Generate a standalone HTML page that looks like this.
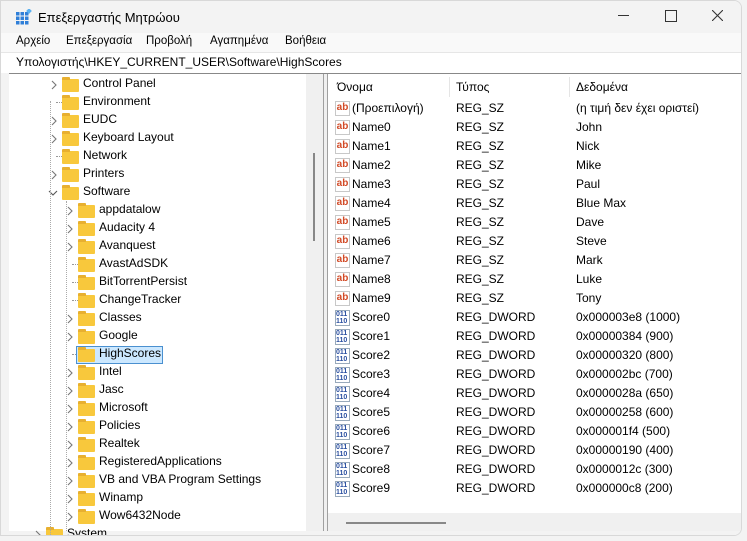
<!DOCTYPE html><html><head><style>
body{margin:0;width:747px;height:541px;background:#f3f3f3;font-family:"Liberation Sans","DejaVu Sans",sans-serif;font-size:12px;color:#000;position:relative;overflow:hidden}
.a{position:absolute;white-space:nowrap}
.win{position:absolute;left:0;top:0;width:740px;height:534px;background:#fff;border:1px solid #d8d8d8;border-radius:0 8px 8px 0;overflow:hidden}
.fold{position:absolute;width:17px;height:13px;background:#f8c83c;border-radius:1px}
.fold:before{content:"";position:absolute;left:0;top:-2px;width:8px;height:3px;background:#e8b030;border-radius:1px 1px 0 0}
.chev{position:absolute}
.ab{position:absolute;width:13px;height:13px;border:1px solid #c8c8c8;background:#fff;color:#d24a26;font-weight:bold;font-size:10px;line-height:12px;text-align:center}
.bi{position:absolute;width:13px;height:14px;color:#2a4fa0;font-size:7px;line-height:7px;font-weight:bold;border:1px solid #9ab}
.m{font-size:11.5px}
</style></head><body>
<div class="win">
<div class="a" style="left:0;top:0;width:740px;height:32px;background:#f3f3f3"></div>
<svg class="a" style="left:15px;top:8px" width="16" height="16"><g fill="#2f7fd8"><rect x="0" y="3" width="3.5" height="3.5"/><rect x="4.5" y="3" width="3.5" height="3.5"/><rect x="9" y="3" width="3.5" height="3.5"/><rect x="0" y="7.5" width="3.5" height="3.5"/><rect x="4.5" y="7.5" width="3.5" height="3.5"/><rect x="9" y="7.5" width="3.5" height="3.5"/><rect x="0" y="12" width="3.5" height="3.5"/><rect x="4.5" y="12" width="3.5" height="3.5"/><rect x="9" y="12" width="3.5" height="3.5"/></g><rect x="11" y="0" width="4" height="4" fill="#5ab0f0" transform="rotate(45 13 2)"/></svg>
<div class="a" style="left:37px;top:9px;font-size:13px">Επεξεργαστής Μητρώου</div>
<div class="a" style="left:617px;top:14px;width:11px;height:1px;background:#333"></div>
<div class="a" style="left:664px;top:9px;width:10px;height:10px;border:1px solid #333"></div>
<svg class="a" style="left:711px;top:9px" width="11" height="11"><path d="M0 0L11 11M11 0L0 11" stroke="#333" stroke-width="1.1"/></svg>
<div class="a" style="left:0;top:32px;width:740px;height:19px;background:#f9f9f9"></div>
<div class="a m" style="left:15px;top:34px">Αρχείο</div>
<div class="a m" style="left:65px;top:34px">Επεξεργασία</div>
<div class="a m" style="left:145px;top:34px">Προβολή</div>
<div class="a m" style="left:209px;top:34px">Αγαπημένα</div>
<div class="a m" style="left:284px;top:34px">Βοήθεια</div>
<div class="a" style="left:0;top:51px;width:740px;height:20px;background:#fff;border-top:1px solid #e6e6e6;border-bottom:1px solid #e6e6e6"></div>
<div class="a" style="left:15px;top:54px">Υπολογιστής\HKEY_CURRENT_USER\Software\HighScores</div>
<div class="a" style="left:0;top:72px;width:8px;height:462px;background:#f3f3f3"></div>
<div class="a" style="left:305px;top:72px;width:17px;height:462px;background:#f0f0f0"></div>
<div class="a" style="left:312px;top:152px;width:2px;height:88px;background:#888"></div>
<div class="a" style="left:322px;top:72px;width:1px;height:462px;background:#a0a0a0"></div>
<div class="a" style="left:323px;top:72px;width:3px;height:462px;background:#f0f0f0"></div>
<div class="a" style="left:326px;top:72px;width:1px;height:462px;background:#a0a0a0"></div>
<div class="a" style="left:8px;top:72px;width:732px;height:1px;background:#888"></div>
<div class="a" style="left:327px;top:512px;width:413px;height:18px;background:#f0f0f0"></div>
<div class="a" style="left:345px;top:521px;width:100px;height:2px;background:#888"></div>
<div class="a" style="left:8px;top:530px;width:732px;height:4px;background:#f3f3f3"></div>
<div class="a" style="left:448px;top:76px;width:1px;height:20px;background:#e5e5e5"></div>
<div class="a" style="left:568px;top:76px;width:1px;height:20px;background:#e5e5e5"></div>
<div class="a" style="left:336px;top:79px">Όνομα</div>
<div class="a" style="left:455px;top:79px">Τύπος</div>
<div class="a" style="left:575px;top:79px">Δεδομένα</div>
<div id="tree"></div><div id="vals"></div>
</div>
<script>
var t=[[1,1,"Control Panel"],[1,0,"Environment"],[1,1,"EUDC"],[1,1,"Keyboard Layout"],[1,0,"Network"],[1,1,"Printers"],[1,2,"Software"],[2,1,"appdatalow"],[2,1,"Audacity 4"],[2,1,"Avanquest"],[2,0,"AvastAdSDK"],[2,0,"BitTorrentPersist"],[2,0,"ChangeTracker"],[2,1,"Classes"],[2,1,"Google"],[2,3,"HighScores"],[2,1,"Intel"],[2,1,"Jasc"],[2,1,"Microsoft"],[2,1,"Policies"],[2,1,"Realtek"],[2,1,"RegisteredApplications"],[2,1,"VB and VBA Program Settings"],[2,1,"Winamp"],[2,1,"Wow6432Node"],[0,1,"System"]];
var h="";t.forEach(function(r,i){var y=77+i*18,off=r[0]==1?0:(r[0]==2?16:-16);
if(r[1]==1)h+='<svg class="chev" style="left:'+(50+off)+'px;top:'+(y+2)+'px" width="6" height="10"><path d="M1 1L5 5L1 9" fill="none" stroke="#777" stroke-width="1.1"/></svg>';
else if(r[1]==2)h+='<svg class="chev" style="left:'+(47+off)+'px;top:'+(y+4)+'px" width="10" height="6"><path d="M1 1L5 5L9 1" fill="none" stroke="#555" stroke-width="1.1"/></svg>';
else h+='<div class="a" style="left:'+(55+off)+'px;top:'+(y+6)+'px;width:6px;border-top:1px dotted #999"></div>';
if(r[1]==3)h+='<div class="a" style="left:75px;top:'+(y-2)+'px;width:85px;height:16px;background:#cce8ff;border:1px solid #4a90d0"></div>';
h+='<div class="fold" style="left:'+(61+off)+'px;top:'+(y+1)+'px"></div><div class="a" style="left:'+(82+off)+'px;top:'+(y-2)+'px">'+r[2]+'</div>';});
h+='<div class="a" style="left:49px;top:100px;height:440px;border-left:1px dotted #aaa"></div><div class="a" style="left:65px;top:200px;height:330px;border-left:1px dotted #aaa"></div>';
document.getElementById("tree").innerHTML=h;
var v=[["(Προεπιλογή)","REG_SZ","(η τιμή δεν έχει οριστεί)"]],n=["John","Nick","Mike","Paul","Blue Max","Dave","Steve","Mark","Luke","Tony"],s=["3e8 (1000)","384 (900)","320 (800)","2bc (700)","28a (650)","258 (600)","1f4 (500)","190 (400)","12c (300)","0c8 (200)"];
for(var i=0;i<10;i++)v.push(["Name"+i,"REG_SZ",n[i]]);for(i=0;i<10;i++)v.push(["Score"+i,"REG_DWORD","0x00000"+s[i]]);
h="";v.forEach(function(r,i){var y=100+i*19;
h+=r[1]=="REG_SZ"?'<div class="ab" style="left:334px;top:'+y+'px">ab</div>':'<div class="bi" style="left:334px;top:'+y+'px">011<br>110</div>';
h+='<div class="a" style="left:351px;top:'+y+'px">'+r[0]+'</div><div class="a" style="left:455px;top:'+y+'px">'+r[1]+'</div><div class="a" style="left:575px;top:'+y+'px">'+r[2]+'</div>';});
document.getElementById("vals").innerHTML=h;
</script>
</body></html>
